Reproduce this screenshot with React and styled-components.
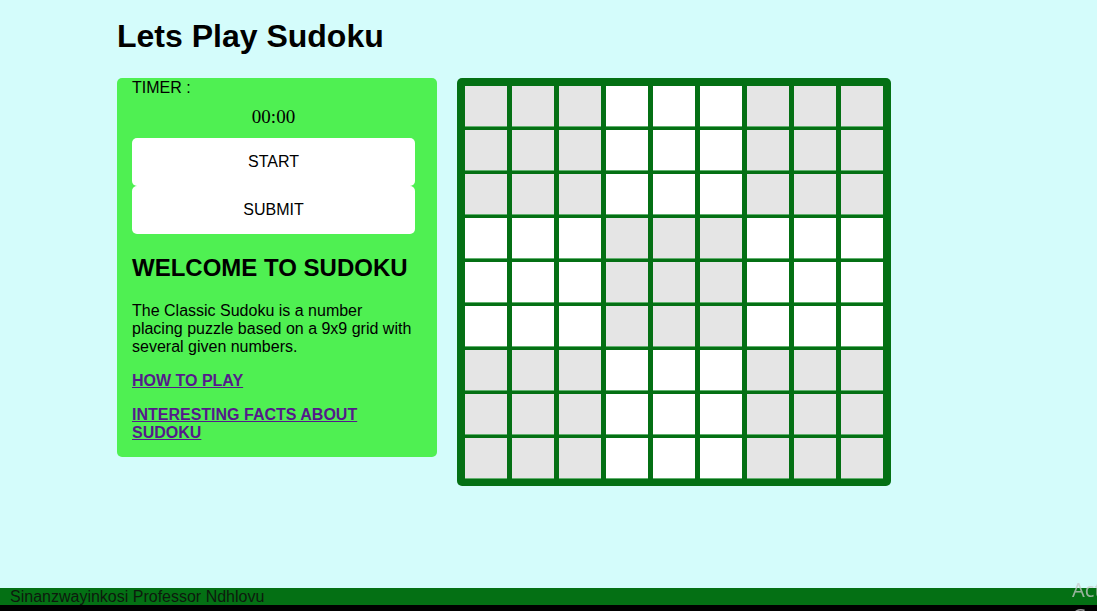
import React from 'react';
import styled, { createGlobalStyle } from 'styled-components';

const GlobalStyle = createGlobalStyle`
	html, body {
		margin: 0;
		padding: 0;
		background: #d4fcfb;
		font-family: 'Liberation Sans', Arial, sans-serif;
		color: #000;
	}
`;

const Page = styled.div`
	min-height: 100vh;
	display: flex;
	flex-direction: column;
	overflow: hidden;
`;

const Container = styled.main`
	width: 863px;
	margin: 0 auto;
`;

const Title = styled.h1`
	font-size: 32px;
	font-weight: bold;
	margin: 18px 0 23px;
`;

const Board = styled.div`
	display: flex;
	align-items: flex-start;
	gap: 20px;
`;

const Panel = styled.section`
	width: 283px;
	padding: 0 22px 15px 15px;
	background: #4ff052;
	border-radius: 5px;
	font-size: 16px;
	line-height: 18px;
`;

const TimerLabel = styled.div`
	line-height: 19px;
`;

const TimerValue = styled.div`
	font-family: 'Liberation Serif', 'Times New Roman', serif;
	font-size: 19px;
	line-height: 20px;
	text-align: center;
	margin: 10px 0 11px;
`;

const Button = styled.button`
	display: block;
	width: 100%;
	height: 48px;
	border: none;
	border-radius: 5px;
	background: #fff;
	font-family: 'Liberation Sans', Arial, sans-serif;
	font-size: 16px;
	color: #000;
	cursor: pointer;
`;

const Heading = styled.h2`
	font-size: 24px;
	font-weight: bold;
	line-height: 18.4px;
	margin: 25px 0 25px;
`;

const Text = styled.p`
	margin: 16px 0;
	&:last-child {
		margin-bottom: 0;
	}
`;

const Link = styled.a`
	font-weight: bold;
	color: #551a8b;
	text-decoration: underline;
`;

const Grid = styled.div`
	display: grid;
	grid-template-columns: repeat(9, 42px);
	grid-auto-rows: 40px;
	column-gap: 5px;
	row-gap: 4px;
	padding: 8px;
	background: #047014;
	border-radius: 5px;
`;

const Cell = styled.div`
	background: ${({ $shaded }) => ($shaded ? '#e5e5e5' : '#fff')};
	box-shadow: 0 1px 0 rgba(160, 220, 170, 0.6);
`;

const Footer = styled.footer`
	margin-top: auto;
	height: 17px;
	line-height: 17px;
	padding-left: 10px;
	background: #047014;
	border-bottom: 6px solid #000;
	font-size: 16px;
	color: #0d1a0d;
	white-space: nowrap;
`;

const Watermark = styled.div`
	position: fixed;
	left: 1072px;
	top: 577px;
	font-family: 'Noto Sans', 'Liberation Sans', sans-serif;
	font-size: 20px;
	line-height: 26px;
	color: rgba(200, 200, 200, 0.75);
	white-space: nowrap;
	pointer-events: none;
`;

const isShaded = (row, col) => {
	const br = Math.floor(row / 3);
	const bc = Math.floor(col / 3);
	return (br + bc) % 2 === 0;
};

const cells = [];
for (let r = 0; r < 9; r++) {
	for (let c = 0; c < 9; c++) {
		cells.push({ key: `${r}-${c}`, shaded: isShaded(r, c) });
	}
}

const App = () => {
	return (
		<Page>
			<GlobalStyle />
			<Container>
				<Title>Lets Play Sudoku</Title>
				<Board>
					<Panel>
						<TimerLabel>TIMER :</TimerLabel>
						<TimerValue>00:00</TimerValue>
						<Button>START</Button>
						<Button>SUBMIT</Button>
						<Heading>WELCOME TO SUDOKU</Heading>
						<Text>
							The Classic Sudoku is a number placing puzzle based on a 9x9 grid
							with several given numbers.
						</Text>
						<Text>
							<Link href='#'>HOW TO PLAY</Link>
						</Text>
						<Text>
							<Link href='#'>INTERESTING FACTS ABOUT SUDOKU</Link>
						</Text>
					</Panel>
					<Grid>
						{cells.map((cell) => (
							<Cell key={cell.key} $shaded={cell.shaded} />
						))}
					</Grid>
				</Board>
			</Container>
			<Footer>Sinanzwayinkosi Professor Ndhlovu</Footer>
			<Watermark>
				Activate Windows
				<br />
				Go to Settings
			</Watermark>
		</Page>
	);
};

export default App;
